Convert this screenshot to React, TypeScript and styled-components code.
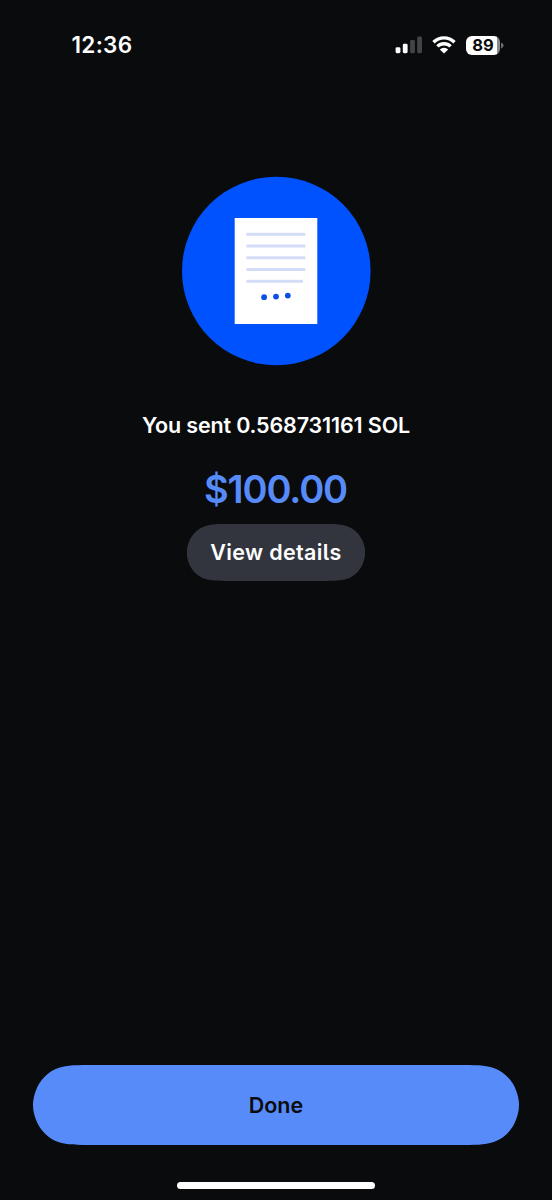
import React from "react";
import styled, { createGlobalStyle } from "styled-components";

const GlobalStyle = createGlobalStyle`
  * { box-sizing: border-box; }
  body { margin: 0; background: #0a0b0d; }
`;

/* Outline of a capsule with continuous (smoothed) corners. */
const capsule = (w: number, h: number) => {
  const r = h / 2;
  const a = 1.528665 * r;
  const b = 1.088493 * r;
  const c = 0.868407 * r;
  const d = 0.631494 * r;
  const e = 0.074911 * r;
  const f = 0.372824 * r;
  const g = 0.16906 * r;
  const i = 0.025 * r;
  const j = 0.755 * r;
  const k = 0.88 * r;
  return [
    `M${a} 0H${w - a}`,
    `C${w - b} 0 ${w - c} 0 ${w - d} ${e}`,
    `C${w - f} ${g} ${w - g} ${f} ${w - e} ${d}`,
    `C${w - i} ${j} ${w} ${k} ${w} ${r}`,
    `C${w} ${h - k} ${w - i} ${h - j} ${w - e} ${h - d}`,
    `C${w - g} ${h - f} ${w - f} ${h - g} ${w - d} ${h - e}`,
    `C${w - c} ${h} ${w - b} ${h} ${w - a} ${h}`,
    `H${a}C${b} ${h} ${c} ${h} ${d} ${h - e}`,
    `C${f} ${h - g} ${g} ${h - f} ${e} ${h - d}`,
    `C${i} ${h - j} 0 ${h - k} 0 ${r}`,
    `C0 ${k} ${i} ${j} ${e} ${d}`,
    `C${g} ${f} ${f} ${g} ${d} ${e}`,
    `C${c} 0 ${b} 0 ${a} 0Z`,
  ].join("");
};

const Screen = styled.main`
  display: flex;
  flex-direction: column;
  align-items: center;
  width: 552px;
  height: 1200px;
  overflow: hidden;
  background: #0a0b0d;
  color: #fff;
  font-family: Inter, "Liberation Sans", sans-serif;
`;

const StatusBar = styled.header`
  display: flex;
  align-items: center;
  justify-content: space-between;
  width: 100%;
  height: 90px;
  padding: 0 48px 0 71.5px;
`;

const Time = styled.time`
  padding-bottom: 2px;
  font-size: 22.5px;
  font-weight: 600;
  letter-spacing: 0.3px;
`;

const Indicators = styled.div`
  display: flex;
  align-items: center;
  gap: 10px;
`;

const Battery = styled.div`
  display: flex;
  align-items: center;
  gap: 1px;
`;

const BatteryLevel = styled.span`
  display: grid;
  place-items: center;
  width: 34px;
  height: 19px;
  border-radius: 6px;
  background: linear-gradient(90deg, #fff 30.5px, #8a8b8c 30.5px);
  color: #0a0b0d;
  font-size: 16.5px;
  font-weight: 700;
  line-height: 19px;
`;

const Content = styled.section`
  display: flex;
  flex: 1;
  flex-direction: column;
  align-items: center;
  padding-top: 86px;
`;

const Illustration = styled.svg`
  display: block;
  width: 190px;
  height: 190px;
`;

const Summary = styled.p`
  margin: 45px 0 0;
  font-size: 21.5px;
  font-weight: 600;
  letter-spacing: -0.15px;
  line-height: 28px;
  white-space: nowrap;
`;

const Amount = styled.h1`
  margin: 26px 0 0;
  padding-right: 1px;
  color: #578bfa;
  font-size: 38px;
  font-weight: 600;
  letter-spacing: -1.15px;
  line-height: 48px;
`;

const Button = styled.button<{ $w: number; $h: number; $bg: string; $fg: string }>`
  width: ${(p) => p.$w}px;
  height: ${(p) => p.$h}px;
  padding: 0;
  border: 0;
  background: ${(p) => p.$bg};
  clip-path: path("${(p) => capsule(p.$w, p.$h)}");
  color: ${(p) => p.$fg};
  font: 600 21.5px/28px Inter, "Liberation Sans", sans-serif;
  font-feature-settings: "cv05";
  white-space: nowrap;
`;

const DetailsButton = styled(Button)`
  margin-top: 11px;
  padding-bottom: 2px;
  letter-spacing: 0.35px;
`;

const Footer = styled.footer`
  display: flex;
  flex-direction: column;
  align-items: center;
  gap: 37px;
  padding-bottom: 11px;
`;

const HomeIndicator = styled.div`
  width: 198px;
  height: 7px;
  border-radius: 4px;
  background: #fff;
`;

const lines = [
  { y: 57.3, w: 59 },
  { y: 69, w: 59 },
  { y: 80.8, w: 59 },
  { y: 92.5, w: 59 },
  { y: 104.3, w: 56.5 },
];

export default function App() {
  return (
    <>
      <GlobalStyle />
      <Screen>
        <StatusBar>
          <Time>12:36</Time>
          <Indicators>
            <svg width="28" height="20" viewBox="0 0 28 20" fill="#fff">
              <rect x="1.6" y="12.2" width="4.8" height="6" rx="1.4" />
              <rect x="8.8" y="8.7" width="4.8" height="9.5" rx="1.4" />
              <rect x="16.1" y="5" width="4.8" height="13.2" rx="1.4" fill="#434446" />
              <rect x="23.2" y="1.5" width="4.8" height="16.7" rx="1.4" fill="#434446" />
            </svg>
            <svg width="24" height="18" viewBox="0 0 24 18">
              <g fill="none" stroke="#fff" strokeWidth="3.4">
                <path d="M1.5 6.2a15 15 0 0 1 21 0" />
                <path d="M5.4 10.4a9.4 9.4 0 0 1 13.2 0" />
              </g>
              <path d="M12 17.5 7.8 13.4a6 6 0 0 1 8.4 0Z" fill="#fff" />
            </svg>
            <Battery>
              <BatteryLevel>89</BatteryLevel>
              <svg width="3" height="7" viewBox="0 0 3 7">
                <path d="M0 0.5Q2.6 1.4 2.6 3.5T0 6.5Z" fill="#6d6e70" />
              </svg>
            </Battery>
          </Indicators>
        </StatusBar>
        <Content>
          <Illustration viewBox="0 0 190 190">
            <circle cx="95.3" cy="95" r="94.3" fill="#0052ff" />
            <path d="M53.7 42H136.3V148H53.7Z" fill="#fff" />
            {lines.map((l) => (
              <rect key={l.y} x="65.4" y={l.y - 0.5} width={l.w} height="3" fill="#d3ddf8" />
            ))}
            <circle cx="83.1" cy="121.2" r="2.9" fill="#0b4fe3" />
            <circle cx="95" cy="120.6" r="2.9" fill="#0b4fe3" />
            <circle cx="106.8" cy="119.6" r="2.9" fill="#0b4fe3" />
          </Illustration>
          <Summary>You sent 0.568731161 SOL</Summary>
          <Amount>$100.00</Amount>
          <DetailsButton $w={178.5} $h={57} $bg="#32353d" $fg="#fff">
            View details
          </DetailsButton>
        </Content>
        <Footer>
          <Button $w={486} $h={80} $bg="#578bfa" $fg="#0a0b0d">
            Done
          </Button>
          <HomeIndicator />
        </Footer>
      </Screen>
    </>
  );
}
